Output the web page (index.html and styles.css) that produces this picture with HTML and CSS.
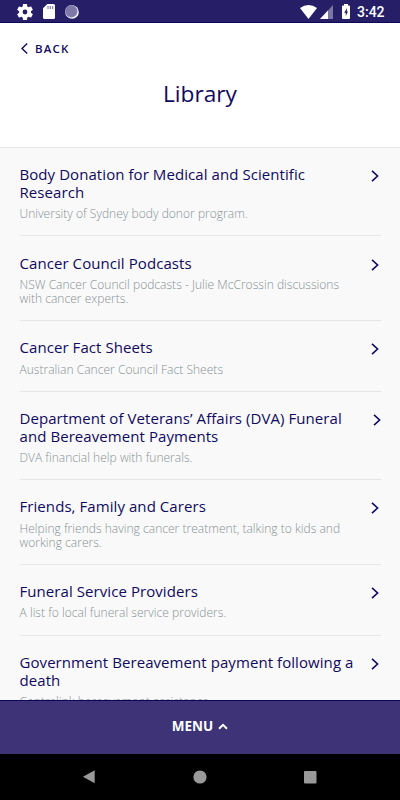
FILE: index.html
```
<!DOCTYPE html>
<html lang="en">

<head>
  <meta charset="utf-8">
  <meta name="viewport" content="width=device-width, initial-scale=1">
  <title>Library</title>
  <link rel="stylesheet" href="styles.css">
</head>

<body>
  <div class="statusbar">
    <svg class="gear" width="16" height="16" viewBox="2 2 20 20"><path fill="#fff" d="M19.43 12.98c.04-.32.07-.64.07-.98s-.03-.66-.07-.98l2.11-1.65c.19-.15.24-.42.12-.64l-2-3.46c-.12-.22-.39-.3-.61-.22l-2.49 1c-.52-.4-1.08-.73-1.69-.98l-.38-2.65C14.46 2.18 14.25 2 14 2h-4c-.25 0-.46.18-.49.42l-.38 2.65c-.61.25-1.17.59-1.69.98l-2.49-1c-.23-.09-.49 0-.61.22l-2 3.46c-.13.22-.07.49.12.64l2.11 1.65c-.04.32-.07.65-.07.98s.03.66.07.98l-2.11 1.65c-.19.15-.24.42-.12.64l2 3.46c.12.22.39.3.61.22l2.49-1c.52.4 1.08.73 1.69.98l.38 2.65c.03.24.24.42.49.42h4c.25 0 .46-.18.49-.42l.38-2.65c.61-.25 1.17-.59 1.69-.98l2.49 1c.23.09.49 0 .61-.22l2-3.46c.12-.22.07-.49-.12-.64l-2.11-1.65zM12 15a3 3 0 1 1 0-6 3 3 0 0 1 0 6z"/></svg>
    <svg class="card" width="12" height="15" viewBox="0 0 12 15"><path fill="#fff" d="M4.300 0H10.500Q12 0 12 1.500V13.500Q12 15 10.500 15H1.500Q0 15 0 13.500V4.300z"/><path stroke="#8f8ab5" stroke-width="1.300" d="M5 2v3M7.300 2v3M9.600 2v3"/></svg>
    <svg class="sync" width="14" height="14" viewBox="0 0 14 14"><circle cx="7" cy="7" r="6.800" fill="#fff"/><circle cx="6.300" cy="6.300" r="6.200" fill="#7e78a8"/><circle cx="6.300" cy="6.300" r="5.800" fill="none" stroke="#a9a5c6" stroke-dasharray="1 1"/></svg>
    <span class="spacer"></span>
    <svg class="wifi" width="17" height="14" viewBox="0 0 17 14"><path fill="#fff" d="M0 3Q8.500-2.800 17 3L8.500 14z"/></svg>
    <svg class="signal" width="13" height="14" viewBox="0 0 13 14"><path fill="#7c76a5" d="M13 0V14H0z"/><path fill="#fff" d="M8 5.400V14H0z"/></svg>
    <svg class="battery" width="8" height="15" viewBox="0 0 8 15"><path fill="#fff" d="M2 0H6V1.500H7Q8 1.500 8 2.500V14Q8 15 7 15H1Q0 15 0 14V2.500Q0 1.500 1 1.500H2z"/><path fill="#261e66" d="M5 4L2.200 8.700H3.700V12L6 7.600H4.800z"/></svg>
    <span class="time">3:42</span>
  </div>

  <header class="header">
    <a class="back"><svg width="7" height="11" viewBox="0 0 7 11"><path d="M6.200.5L1 5.500 6.200 10.500"/></svg>BACK</a>
    <h1>Library</h1>
  </header>

  <main class="list">
    <div class="item">
      <div class="text">
        <h2>Body Donation for Medical and Scientific<br>Research</h2>
        <p>University of Sydney body donor program.</p>
      </div>
      <svg class="chevron" width="8" height="12" viewBox="0 0 8 12"><path d="M1 .8L6.600 6 1 11.200"/></svg>
    </div>
    <div class="item">
      <div class="text">
        <h2>Cancer Council Podcasts</h2>
        <p>NSW Cancer Council podcasts - Julie McCrossin discussions<br>with cancer experts.</p>
      </div>
      <svg class="chevron" width="8" height="12" viewBox="0 0 8 12"><path d="M1 .8L6.600 6 1 11.200"/></svg>
    </div>
    <div class="item">
      <div class="text">
        <h2>Cancer Fact Sheets</h2>
        <p>Australian Cancer Council Fact Sheets</p>
      </div>
      <svg class="chevron" width="8" height="12" viewBox="0 0 8 12"><path d="M1 .8L6.600 6 1 11.200"/></svg>
    </div>
    <div class="item wide">
      <div class="text">
        <h2>Department of Veterans’ Affairs (DVA) Funeral<br>and Bereavement Payments</h2>
        <p>DVA financial help with funerals.</p>
      </div>
      <svg class="chevron" width="8" height="12" viewBox="0 0 8 12"><path d="M1 .8L6.600 6 1 11.200"/></svg>
    </div>
    <div class="item">
      <div class="text">
        <h2>Friends, Family and Carers</h2>
        <p>Helping friends having cancer treatment, talking to kids and<br>working carers.</p>
      </div>
      <svg class="chevron" width="8" height="12" viewBox="0 0 8 12"><path d="M1 .8L6.600 6 1 11.200"/></svg>
    </div>
    <div class="item">
      <div class="text">
        <h2>Funeral Service Providers</h2>
        <p>A list fo local funeral service providers.</p>
      </div>
      <svg class="chevron" width="8" height="12" viewBox="0 0 8 12"><path d="M1 .8L6.600 6 1 11.200"/></svg>
    </div>
    <div class="item">
      <div class="text">
        <h2>Government Bereavement payment following a<br>death</h2>
        <p>Centrelink bereavement assistance.</p>
      </div>
      <svg class="chevron" width="8" height="12" viewBox="0 0 8 12"><path d="M1 .8L6.600 6 1 11.200"/></svg>
    </div>
  </main>

  <div class="menu">MENU<svg width="10" height="7" viewBox="0 0 10 7"><path d="M1 5.800L5 1.800 9 5.800"/></svg></div>

  <nav class="navbar">
    <svg width="12" height="14" viewBox="0 0 12 14"><path d="M11.700.3V13.300L0 6.800z"/></svg>
    <svg width="14" height="14" viewBox="0 0 14 14"><circle cx="7" cy="7" r="6.600"/></svg>
    <svg width="13" height="13" viewBox="0 0 13 13"><rect width="12.500" height="12.500" rx="1"/></svg>
  </nav>
</body>

</html>
```
FILE: styles.css
```
* {
  box-sizing: border-box;
}

body {
  margin: 0;
  height: 800px;
  display: flex;
  flex-direction: column;
  overflow: hidden;
  background: #f9f9f9;
  color: #100a60;
  font-family: "Open Sans", "Noto Sans", sans-serif;
}

svg {
  display: block;
  flex: none;
}

h1,
h2,
p {
  margin: 0;
  white-space: nowrap;
}

.statusbar {
  flex: none;
  display: flex;
  align-items: center;
  height: 23px;
  padding: 1px 16px 0 17px;
  background: #261e66;
  border-bottom: 1px solid #0c0658;
}

.card {
  margin-left: 10px;
}

.sync {
  margin-left: 10px;
}

.spacer {
  flex: 1;
}

.signal {
  margin-left: 3px;
}

.battery {
  margin-left: 9px;
}

.time {
  width: 27px;
  margin-left: 7px;
  color: #fff;
  font: 500 14px/20px Roboto, sans-serif;
  white-space: nowrap;
}

.header {
  flex: none;
  height: 125px;
  padding: 18px 20px 0;
  background: #fff;
  border-bottom: 1px solid #e6e6e6;
}

.back {
  display: flex;
  align-items: center;
  gap: 7px;
  height: 14px;
  padding-left: 1px;
  font-size: 11.5px;
  font-weight: 600;
  letter-spacing: 1.2px;
}

.back svg,
.chevron,
.menu svg {
  fill: none;
  stroke: #100a60;
  stroke-width: 1.4;
}

h1 {
  margin-top: 24px;
  font-size: 22.7px;
  font-weight: 400;
  line-height: 30px;
  text-align: center;
}

.list {
  flex: 1;
  min-height: 0;
  overflow: hidden;
  padding: 0 19px 0 20px;
}

.item {
  display: flex;
  justify-content: space-between;
  padding: 18.1px 2px 14.2px 0;
  border-bottom: 1px solid #e6e6e6;
}

.wide {
  padding-right: 0;
}

.text {
  margin-left: -.5px;
}

h2 {
  font-size: 15px;
  font-weight: 400;
  letter-spacing: .07px;
  line-height: 17.8px;
}

p {
  margin-top: 5.6px;
  color: #879194;
  font-size: 12px;
  font-weight: 300;
  letter-spacing: .03px;
  line-height: 14px;
}

.chevron {
  margin-top: 4px;
  stroke-width: 1.6;
}

.menu {
  flex: none;
  display: flex;
  align-items: center;
  justify-content: center;
  gap: 5px;
  height: 54px;
  padding-bottom: 3px;
  background: #3d3376;
  border-top: 1px solid #0c0658;
  color: #fff;
  font-size: 13.5px;
  font-weight: 700;
}

.menu svg {
  stroke: #fff;
  stroke-width: 2;
}

.navbar {
  flex: none;
  display: flex;
  align-items: center;
  justify-content: space-between;
  height: 46px;
  padding: 0 83px;
  background: #000;
  fill: #999;
}
```
